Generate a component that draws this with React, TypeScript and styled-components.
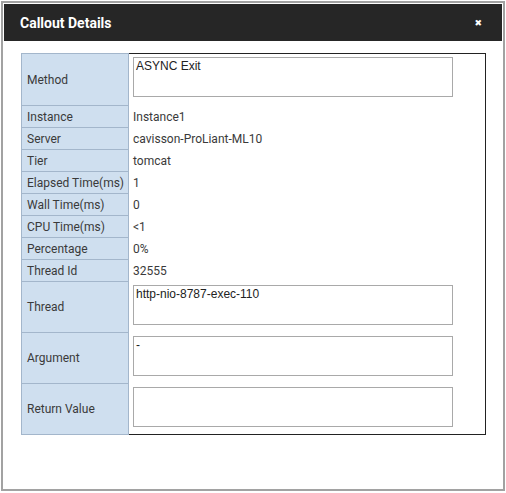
import * as React from 'react';
import styled, { createGlobalStyle } from 'styled-components';

type Row = { label: string; value: string; box?: boolean };

const rows: Row[] = [
    { label: 'Method', value: 'ASYNC Exit', box: true },
    { label: 'Instance', value: 'Instance1' },
    { label: 'Server', value: 'cavisson-ProLiant-ML10' },
    { label: 'Tier', value: 'tomcat' },
    { label: 'Elapsed Time(ms)', value: '1' },
    { label: 'Wall Time(ms)', value: '0' },
    { label: 'CPU Time(ms)', value: '<1' },
    { label: 'Percentage', value: '0%' },
    { label: 'Thread Id', value: '32555' },
    { label: 'Thread', value: 'http-nio-8787-exec-110', box: true },
    { label: 'Argument', value: '-', box: true },
    { label: 'Return Value', value: '', box: true },
];

const App = () => (
    <>
        <GlobalStyle />
        <Dialog>
            <Header>
                <Title>Callout Details</Title>
                <Close>✖</Close>
            </Header>
            <Body>
                <DetailTable>
                    <colgroup>
                        <col style={{ width: 107 }} />
                        <col />
                    </colgroup>
                    <tbody>
                        {rows.map((r, i) => (
                            <DetailRow key={r.label} tall={r.box} first={i === 0}>
                                <LabelCell>{r.label}</LabelCell>
                                <ValueCell boxed={r.box}>
                                    {r.box
                                        ? <ValueBox readOnly value={r.value} />
                                        : r.value}
                                </ValueCell>
                            </DetailRow>
                        ))}
                    </tbody>
                </DetailTable>
            </Body>
        </Dialog>
    </>
);

export default App;


/** styles below */

const GlobalStyle = createGlobalStyle`
    body {
        margin: 0;
        background: #ffffff;
        font-family: Roboto, "Liberation Sans", sans-serif;
    }
`;

const Dialog = styled.div`
    box-sizing: border-box;
    margin: 1px;
    width: 504px;
    height: 490px;
    border: 2px solid #a2a2a2;
    padding: 1px;
    background: #fff;
    display: flex;
    flex-direction: column;
`;

const Header = styled.div`
    height: 37px;
    flex-shrink: 0;
    background: #262626;
    display: flex;
    align-items: center;
    justify-content: space-between;
    padding: 0 20px 0 16px;
`;

const Title = styled.div`
    color: #fff;
    font-size: 14px;
    font-weight: 700;
`;

const Close = styled.div`
    color: #fff;
    font-size: 9px;
    font-family: "DejaVu Sans", sans-serif;
`;

const Body = styled.div`
    padding: 12px 0 0 17px;
`;

const DetailTable = styled.table`
    border-collapse: collapse;
    table-layout: fixed;
    border: 1px solid #222;
    width: 465px;
    font-size: 12px;
    color: #3a3a3a;
`;

const DetailRow = styled.tr<{ tall?: boolean; first?: boolean }>`
    height: ${p => (p.tall ? (p.first ? 52 : 51) : 22)}px;
`;

const LabelCell = styled.td`
    padding: 0 5px;
    background: #cfdfef;
    border: 1px solid #a3b6cb;
    white-space: nowrap;
    overflow: hidden;
`;

const ValueCell = styled.td<{ boxed?: boolean }>`
    padding: ${p => (p.boxed ? '3px 4px 0' : '0 4px')};
    vertical-align: ${p => (p.boxed ? 'top' : 'middle')};
`;

const ValueBox = styled.textarea`
    display: block;
    box-sizing: border-box;
    width: 320px;
    height: 40px;
    margin: 0;
    padding: 1px 2px;
    border: 1px solid #a9a9a9;
    resize: none;
    outline: none;
    font-family: "Liberation Sans", Arial, sans-serif;
    font-size: 12px;
    color: #222;
`;
